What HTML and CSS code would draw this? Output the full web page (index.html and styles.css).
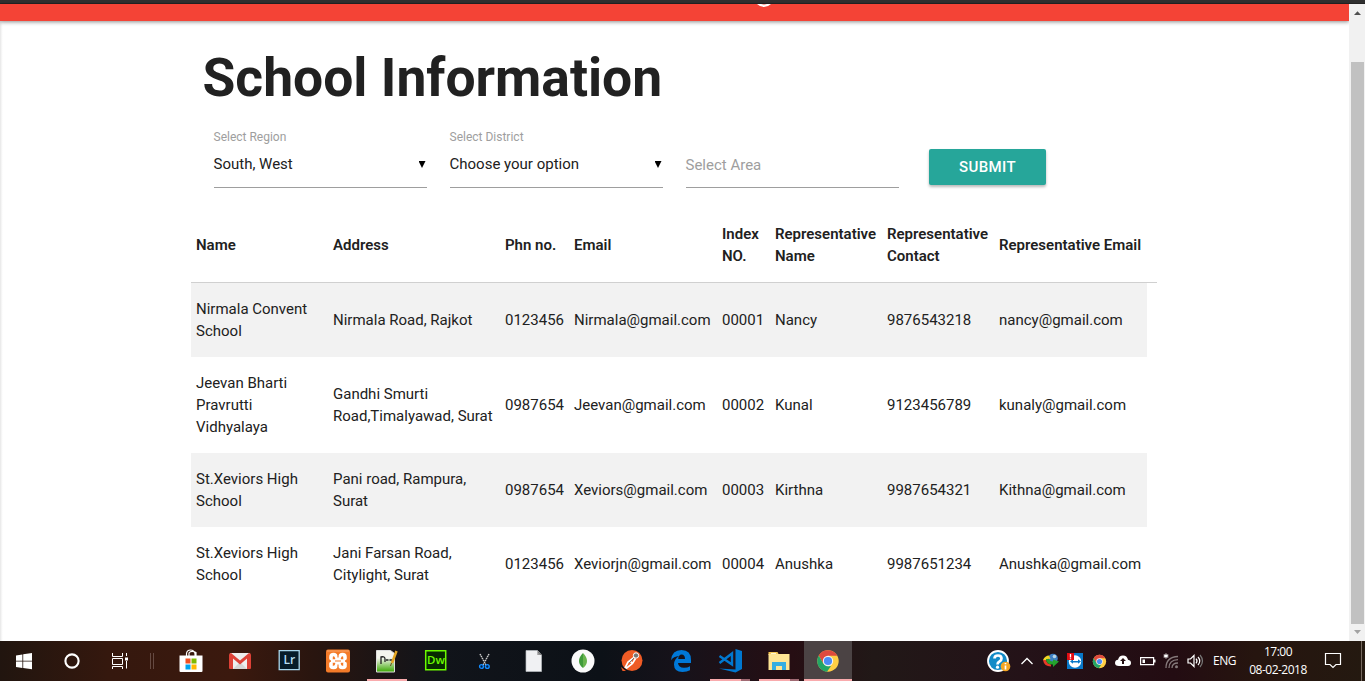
FILE: index.html
```html
<!DOCTYPE html>
<html lang="en">
<head>
<meta charset="utf-8">
<title>School Information</title>
<link rel="stylesheet" href="styles.css">
</head>
<body>
<div class="window-edge"></div>
<div class="viewport">
  <div class="page">
    <nav class="navbar"><svg width="14" height="3" viewBox="0 0 14 3"><path d="M0 0Q3 3 7 3T14 0z" fill="#fff"/><path d="M4 0h6L7 1.2z" fill="#f9a49b"/></svg></nav>
    <main class="content">
      <h1 class="title">School Information</h1>
      <form class="filters">
        <div class="field"><label class="label">Select Region</label><div class="control"><span>South, West</span><i class="caret"></i></div></div>
        <div class="field"><label class="label">Select District</label><div class="control"><span>Choose your option</span><i class="caret"></i></div></div>
        <div class="field"><label class="label"></label><div class="control empty"><span>Select Area</span></div></div>
        <button class="submit" type="button">SUBMIT</button>
      </form>
      <div class="table">
        <div class="row head"><span>Name</span><span>Address</span><span>Phn no.</span><span>Email</span><span>Index<br>NO.</span><span>Representative<br>Name</span><span>Representative<br>Contact</span><span>Representative Email</span></div>
        <div class="row odd"><span>Nirmala Convent<br>School</span><span>Nirmala Road, Rajkot</span><span>0123456</span><span>Nirmala@gmail.com</span><span>00001</span><span>Nancy</span><span>9876543218</span><span>nancy@gmail.com</span></div>
        <div class="row"><span>Jeevan Bharti<br>Pravrutti<br>Vidhyalaya</span><span>Gandhi Smurti<br>Road,Timalyawad, Surat</span><span>0987654</span><span>Jeevan@gmail.com</span><span>00002</span><span>Kunal</span><span>9123456789</span><span>kunaly@gmail.com</span></div>
        <div class="row odd"><span>St.Xeviors High<br>School</span><span>Pani road, Rampura,<br>Surat</span><span>0987654</span><span>Xeviors@gmail.com</span><span>00003</span><span>Kirthna</span><span>9987654321</span><span>Kithna@gmail.com</span></div>
        <div class="row"><span>St.Xeviors High<br>School</span><span>Jani Farsan Road,<br>Citylight, Surat</span><span>0123456</span><span>Xeviorjn@gmail.com</span><span>00004</span><span>Anushka</span><span>9987651234</span><span>Anushka@gmail.com</span></div>
      </div>
    </main>
  </div>
  <div class="scrollbar">
    <svg width="16" height="16" viewBox="0 0 16 16"><path d="M5 11L8.5 7.200 12 11z" fill="#505050"/></svg>
    <div class="thumb"></div>
    <svg width="16" height="17" viewBox="0 0 16 17"><path d="M5 6h7L8.500 10z" fill="#a3a3a3"/></svg>
  </div>
</div>
<footer class="taskbar">
  <div class="apps">
    <div class="app sys"><svg width="24" height="24" viewBox="0 0 24 24"><path fill="#fff" d="M4 6.500l6.400-1v6.300H4zM11.200 5.300L20 4v7.800h-8.800zM4 12.600h6.400v6.300L4 18zM11.200 12.600H20v7.700L11.200 19z"/></svg></div>
    <div class="app sys"><svg width="24" height="24" viewBox="0 0 24 24"><circle cx="12" cy="12" r="6.600" fill="none" stroke="#fff" stroke-width="2.100"/></svg></div>
    <div class="app sys"><svg width="24" height="24" viewBox="0 0 24 24"><path fill="none" stroke="#fff" d="M4.500 4v3.500h10v-3.500M4.500 20v-2.500h10v2.500M4.500 9.500h10v6h-10zM18.500 4v3M18.500 12v7.500"/><path fill="#fff" d="M17 8.500h3v3h-3z"/></svg></div>
    <div class="divider"><svg width="8" height="16"><path d="M2.500 0v16M5.500 0v16" stroke="#654a42"/></svg></div>
    <div class="app"><svg width="24" height="24" viewBox="0 0 24 24"><path fill="none" stroke="#fff" stroke-width="1.200" d="M7.500 7V4.500Q8 1 11.500 1T16 4.500V7M10 7V4Q12 1 17 3.500V7"/><path fill="#fff" d="M.5 6.500h23v15.500q0 1-1 1h-21q-1 0-1-1z"/><path fill="#f25022" d="M6.500 9.500h5v5h-5z"/><path fill="#7fba00" d="M12.500 9.500h5v5h-5z"/><path fill="#00a4ef" d="M6.500 15.500h5v5h-5z"/><path fill="#ffb900" d="M12.500 15.500h5v5h-5z"/></svg></div>
    <div class="app"><svg width="24" height="24" viewBox="0 0 24 24"><path fill="#eee" d="M2 4h20v16H2z"/><path fill="#d5d5d5" d="M5 20l7-7 7 7z"/><path fill="#dd4137" d="M1 6q0-2 2-2l9 7.500L21 4q2 0 2 2v13q0 1-1 1h-3V9.500l-7 6-7-6V20H2q-1 0-1-1z"/></svg></div>
    <div class="app"><svg width="24" height="24" viewBox="0 0 24 24"><path fill="#061c29" stroke="#a9d7ed" stroke-width="1.300" d="M2.200 1.700h20v19h-20z"/><text x="6.500" y="15" class="glyph lr">Lr</text></svg></div>
    <div class="app"><svg width="24" height="24" viewBox="0 0 24 24"><rect y=".5" width="24" height="23" rx="2" fill="#f47b29"/><path d="M1 2h22" stroke="#f9a66b"/><path fill="none" stroke="#fff" stroke-width="3.600" stroke-linejoin="round" stroke-linecap="round" d="M5 9.500V8q0-2.500 2.500-2.500T11 9v6q-.5 3.500-3.500 3.500T5 16v-1.500M19 9.500V8q0-2.500-2.500-2.500T13 9v6q.5 3.500 3.500 3.500T19 16v-1.500M6.500 12h11"/><path stroke="#f47b29" stroke-width="1.200" d="M9 12h6M12 4v4.500M12 15.500V20"/></svg></div>
    <div class="app open"><svg width="24" height="24" viewBox="0 0 24 24"><defs><linearGradient id="npp" x2="0" y2="1"><stop offset=".35" stop-color="#f5f5ee"/><stop offset="1" stop-color="#38a800"/></linearGradient></defs><path fill="url(#npp)" stroke="#ddd" d="M1.500 1.500h14l4 3V23h-18z"/><path stroke="#222" stroke-width="1.300" fill="none" d="M6 15V8q4-1 4 2v3M11 11h2.500M14.500 11h2.500"/><path stroke="#e4a522" stroke-width="2.600" d="M21.500 2L17 14"/><path stroke="#6a4b22" d="M16.500 14l-1 3"/></svg></div>
    <div class="app"><svg width="24" height="24" viewBox="0 0 24 24"><path fill="#062b00" stroke="#6cfa00" stroke-width="1.500" d="M1.700 1.700h20v19h-20z"/><text x="3" y="15" class="glyph dw">Dw</text></svg></div>
    <div class="app"><svg width="24" height="24" viewBox="0 0 24 24"><path stroke="#ccc" stroke-width="1.400" stroke-dasharray="1.500 .7" d="M7 5L13 16M16 5L10 16"/><circle cx="8.500" cy="17.500" r="1.900" fill="#031d40" stroke="#128cff" stroke-width="1.400"/><circle cx="14.300" cy="17.500" r="1.900" fill="#031d40" stroke="#128cff" stroke-width="1.400"/></svg></div>
    <div class="app"><svg width="24" height="24" viewBox="0 0 24 24"><path fill="#f0f1f3" stroke="#b9bdc2" stroke-width=".7" d="M4 1.500h11.500l4 4.500V22.500H4z"/><path fill="#777" d="M15.500 1.500L19.500 6h-4z"/><path fill="#fff" d="M16.500 4.300l1.200 1.200h-1.200z"/></svg></div>
    <div class="app"><svg width="24" height="24" viewBox="0 0 24 24"><circle cx="12" cy="12" r="11.500" fill="#fafafa"/><path fill="#409b3b" d="M12 4q-4 4-4 8 0 4 4 7z"/><path fill="#69b44e" d="M12 4q4 4 4 8 0 4-4 7z"/></svg></div>
    <div class="app"><svg width="24" height="24" viewBox="0 0 24 24"><circle cx="12" cy="11.500" r="10.500" fill="#ef5b25"/><path d="M1 18l5 4H2.500z" fill="#ef5b25"/><circle cx="16" cy="6.500" r="2.700" fill="#777" stroke="#fff"/><path stroke="#fff" stroke-width="1.700" fill="none" d="M14 8.500L8 13l-3 6M15.500 9.500l-3 5L6 19.500M10 12l2 2"/><path stroke="#777" d="M14 9l-5 5"/></svg></div>
    <div class="app"><svg width="24" height="24" viewBox="0 0 24 24"><path fill="#0078d7" d="M2 11.200Q3 1 12.500 1 22 1 22 11v3H9q.5 4.800 6 4.800 3.500 0 6-1.600v4Q18 23 13.500 23 5 23 5 15.500 5 10 10 7 4.500 7.500 2 11.200zM9.200 10H16q0-4.500-3.400-4.500Q9.700 5.500 9.200 10z"/></svg></div>
    <div class="app open split"><svg width="26" height="24" viewBox="0 0 26 24"><path fill="#0078d0" d="M18.500 0l6.500 2v18l-6.500 3.500L2 19.500l16.500 1z"/><path fill="none" stroke="#0078d0" stroke-width="2.400" d="M2.500 7l12.500 8.500V4.500L2.500 14"/></svg></div>
    <div class="app open split"><svg width="24" height="24" viewBox="0 0 24 24"><path fill="#f5c653" d="M1.500 3h9l1.500 3H1.500z"/><path fill="#ffe594" d="M1.500 5h21v16h-21z"/><path fill="#fff7d0" d="M4 4h5v1H4z"/><path fill="#35aee2" d="M5 13h14v8h-4v-4H9v4H5z"/></svg></div>
    <div class="app active"><svg width="24" height="24" viewBox="0 0 24 24"><use href="#chrome"/></svg></div>
  </div>
  <div class="tray">
    <svg class="help" width="24" height="24" viewBox="0 0 24 24"><circle cx="11" cy="11" r="10" fill="#138bc7" stroke="#fff" stroke-width="1.800"/><path fill="none" stroke="#fff" stroke-width="2.700" d="M7.500 8.500q0-3 3.500-3t3.500 3q0 2-2 3t-2 3"/><circle cx="10.500" cy="17.200" r="1.600" fill="#fff"/><circle cx="18.500" cy="16.500" r="4.800" fill="#f5a623"/><path stroke="#fff" stroke-width="1.700" d="M18.500 15.500v4M18.500 13v1.300"/></svg>
    <svg class="chevron" width="14" height="16"><path d="M1.500 11L7 5.500l5.500 5.500" fill="none" stroke="#fff" stroke-width="1.300"/></svg>
    <svg class="idm" width="16" height="16" viewBox="0 0 16 16"><circle cx="10" cy="5.500" r="4.800" fill="#3f7fc4"/><circle cx="11.500" cy="3.500" r="1.800" fill="#b7d4e7"/><path fill="#f2d625" d="M0 7q2-4.500 6-4.500L7.500 6Q3 5 3 8z"/><path fill="#e43b27" d="M0 7h3q1 4 5 4.500v2Q1 13.500 0 7z"/><path fill="#24a32d" d="M3 6h3q1 2.500 4 2.500V6.500l6 2-6 5.500v-2.500Q3 11.500 3 6z"/></svg>
    <svg class="viewer" width="16" height="16" viewBox="0 0 16 16"><path fill="#0878c9" d="M0 0h16v16H0z"/><circle cx="8" cy="8.500" r="6.200" fill="#fff"/><path fill="#0878c9" d="M3 8.500l3-2.200V8h5V6.300l3 2.200-3 2.300V9.500H6v1.300z"/><path fill="#e20d13" d="M0 0h7v7H0z"/><path stroke="#fff" stroke-width="1.300" d="M3.500 1v3.500M3.500 5.300v1"/></svg>
    <svg class="browser" width="15" height="15" viewBox="0 0 24 24"><use href="#chrome"/></svg>
    <svg class="cloud" width="16" height="16" viewBox="0 0 16 16"><path fill="#fff" d="M4 13q-4 0-4-3t3-3.200Q4 2.500 8 2.500t5 4.300q3 .5 3 3.200t-3 3z"/><path fill="#250f12" d="M8 5l3 3H9v3H7V8H5z"/></svg>
    <svg class="battery" width="16" height="16"><path fill="none" stroke="#fff" stroke-width="1.200" d="M.6 4.600h13v7H.6z"/><path fill="#fff" d="M2.500 6.500h2.500v3.500H2.500zM14 6.500h1.500v3H14z"/></svg>
    <svg class="wifi" width="16" height="18"><path stroke="#fff" stroke-width="1.100" d="M3 1.500v5M.7 2.700l4.600 2.600M5.300 2.700L.7 5.300"/><path fill="none" stroke="#85797a" stroke-width="1.300" d="M3 16Q3 5 15 4.500M6 16q0-8 9-8.300M9 16q0-5 6-5"/><circle cx="13.500" cy="14.700" r="1.500" fill="#85797a"/></svg>
    <svg class="volume" width="17" height="16"><path fill="none" stroke="#fff" stroke-width="1.200" d="M1 6h2.500L7 2.500v11L3.500 10H1zM9 5.700q2 2.300 0 4.600M11 4q3.500 4 0 8"/><path fill="none" stroke="#777" stroke-width="1.200" d="M13 2q5 6 0 12"/></svg>
    <span class="lang">ENG</span>
    <div class="clock"><span>17:00</span><span>08-02-2018</span></div>
    <svg class="action" width="18" height="18"><path fill="none" stroke="#fff" stroke-width="1.200" d="M1.500 1.500h15v11H12L9 15.500 6 12.500H1.500z"/></svg>
    <i class="desktop"></i>
  </div>
</footer>
<svg width="0" height="0" class="defs"><defs><g id="chrome"><circle cx="12" cy="12" r="10.700" fill="#ffce44"/><path fill="#df4a3e" d="M2.700 6.600A10.700 10.700 0 0 1 21.300 6.700H12L7.400 14.700z"/><path fill="#23a566" d="M2.700 6.600L7.400 14.700l4.600 2.600 3-.4-4 5.800A10.700 10.700 0 0 1 2.700 6.600z"/><circle cx="12" cy="12" r="5.200" fill="#f4f4f4"/><circle cx="12" cy="12" r="4.100" fill="#4c8bf5"/></g></defs></svg>
</body>
</html>
```
FILE: styles.css
```css
* { box-sizing: border-box; }
body { margin: 0; width: 1365px; height: 681px; overflow: hidden; display: flex; flex-direction: column; background: #fff; color: #212121; font: 15px/22px Roboto, sans-serif; }
svg { display: block; flex: none; }
.defs { position: absolute; }

.window-edge { height: 4px; flex: none; background: #303030; border-bottom: 1px solid #242424; }
.viewport { height: 637px; flex: none; display: flex; }
.page { width: 1349px; background: linear-gradient(90deg, #e6e6e6, #fafafa 2px, #fff 3px); }
.navbar { height: 17px; background: #f44336; box-shadow: 0 1px 4px rgba(0,0,0,.45); padding-left: 757px; }
.content { padding: 22px 0 0 191px; }
.title { margin: 0 0 0 11.500px; font-size: 53.400px; line-height: 70px; font-weight: 700; }

.filters { display: flex; padding: 15px 0 0 22.500px; height: 95px; }
.field { width: 213px; margin-right: 23px; }
.label { display: block; height: 18px; font-size: 12px; line-height: 18px; color: #9e9e9e; }
.control { height: 42px; border-bottom: 1px solid #9e9e9e; display: flex; justify-content: space-between; padding-top: 7px; }
.control.empty { color: #9e9e9e; padding-top: 8px; }
.caret { width: 7px; height: 7px; background: #000; clip-path: polygon(0 0, 100% 0, 50% 100%); margin: 8px 1px 0 0; }
.submit { width: 117px; height: 36px; margin: 21px 0 0 7.500px; border: 0; border-radius: 2px; background: #26a69a; color: #fff; font: 500 15px/36px Roboto, sans-serif; letter-spacing: .4px; padding: 0; box-shadow: 0 2px 3px rgba(0,0,0,.28); }

.row { display: grid; grid-template-columns: 137px 172px 69px 148px 53px 112px 112px 153px; align-items: center; width: 956px; padding: 15px 0; }
.row span { padding-left: 5px; white-space: nowrap; }
.head { width: 966px; height: 75px; border-bottom: 1px solid #d0d0d0; font-weight: 600; }
.odd { background: #f2f2f2; }

.scrollbar { width: 16px; background: #f1f1f1; display: flex; flex-direction: column; }
.thumb { width: 13px; height: 562px; margin: 42px 0 0 2px; background: #c1c1c1; }

.taskbar { height: 40px; flex: none; display: flex; justify-content: space-between; color: #fff; background: linear-gradient(90deg, #21150f 0, #35180e 8%, #3b190e 17%, #29150f 23%, #11141a 32%, #0c1117 44%, #17121a 50%, #260e13 58%, #211817 64%, #241218 75%, #230c12 86%, #26150f 92%, #241910 100%); }
.apps { display: flex; }
.app { width: 49px; height: 40px; display: flex; align-items: center; justify-content: center; }
.sys { width: 48px; }
.divider { width: 16px; margin-right: 6px; display: flex; align-items: center; justify-content: center; }
.open { background: linear-gradient(#f9abad, #f9abad) center bottom / 40px 2px no-repeat; }
.split { background: linear-gradient(90deg, #f9abad 31px, #a06a73 31px) center bottom / 40px 2px no-repeat; }
.active { width: 48px; margin-left: 1px; background: #4b4344; border-bottom: 2px solid #f9abad; padding-top: 2px; }
.glyph { font: 600 12px "Open Sans", sans-serif; }
.lr { fill: #b5def2; }
.dw { fill: #6cfa00; font-size: 11.500px; }

.tray { width: 379px; display: flex; align-items: center; padding-left: 1px; }
.help { margin-top: 2px; }
.chevron, .idm, .browser, .battery, .lang { margin-left: 9px; }
.viewer, .cloud, .volume { margin-left: 8px; }
.wifi { margin: -1px 0 0 7px; }
.lang { width: 24px; font: 12px/18px "Open Sans", sans-serif; letter-spacing: -.5px; }
.clock { width: 60px; margin-left: 11px; display: flex; flex-direction: column; text-align: center; font: 12px/18px "Open Sans", sans-serif; letter-spacing: -.5px; white-space: nowrap; }
.action { margin-left: 16px; }
.desktop { width: 1px; height: 40px; margin-left: 19px; background: #75695f; }
```
